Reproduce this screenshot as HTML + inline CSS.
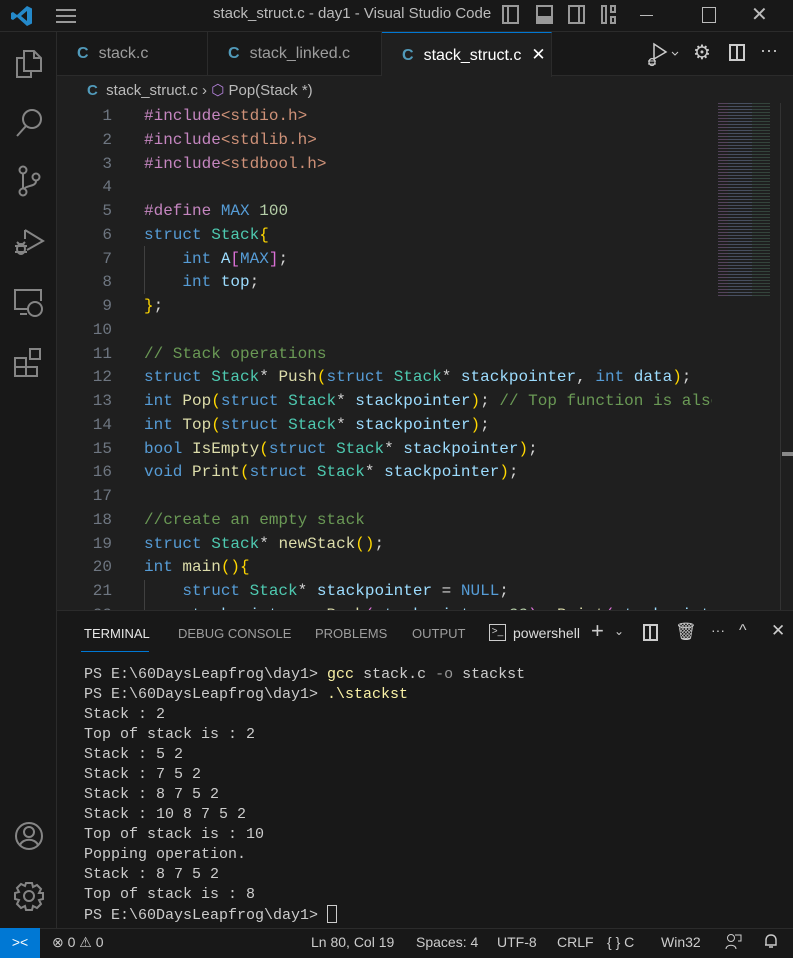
<!DOCTYPE html>
<html><head><meta charset="utf-8"><style>
*{margin:0;padding:0;box-sizing:border-box}
body{width:793px;height:958px;background:#1f1f1f;overflow:hidden;position:relative;font-family:"Liberation Sans",sans-serif;color:#ccc}
.abs{position:absolute}
.title{left:0;top:0;width:793px;height:32px;background:#181818;border-bottom:1px solid #2b2b2b}
.act{left:0;top:32px;width:57px;height:896px;background:#181818;border-right:1px solid #2b2b2b}
.tabs{left:57px;top:32px;width:736px;height:44px;background:#181818;border-bottom:1px solid #2b2b2b}
.tab{position:absolute;top:0;height:44px;border-right:1px solid #2b2b2b;font-size:16px;line-height:44px;color:#9d9d9d}
.tab b{color:#519aba;font-weight:bold;margin:0 10px 0 20px}
.code{font-family:"Liberation Mono",monospace;font-size:16px;white-space:pre;line-height:23.75px}
.ln{left:60px;width:52px;text-align:right;color:#6e7681}
.src{left:144px;width:568px;overflow:hidden;color:#9cdcfe}
.k{color:#569cd6}.p{color:#c586c0}.s{color:#ce9178}.t{color:#4ec9b0}.f{color:#dcdcaa}.n{color:#b5cea8}.c{color:#6a9955}.y{color:#ffd700}.m{color:#da70d6}.w{color:#d4d4d4}
.term{left:57px;top:610px;width:736px;height:318px;background:#181818;border-top:1px solid #2b2b2b}
.th{font-size:13px;color:#9d9d9d;top:626px}
.tout{left:84px;top:665px;font-family:"Liberation Mono",monospace;font-size:15px;line-height:20px;white-space:pre;color:#ccc}
.status{left:0;top:928px;width:793px;height:30px;background:#181818;border-top:1px solid #2b2b2b}
.st{position:absolute;top:934px;font-size:14px;color:#ccc}
.ic{stroke:#858585;fill:none;stroke-width:2}
</style></head><body>
<div class="abs title"></div>
<svg class="abs" style="left:10px;top:4px" width="24" height="24" viewBox="0 0 24 24"><path d="M17 2 L22 4.5 V19.5 L17 22 L7 13 L3 16 L1 15 V9 L3 8 L7 11 Z M17 7 L11 12 L17 17Z" fill="#2489ca"/></svg>
<div class="abs" style="left:56px;top:9px;width:20px;height:14px;border-top:2px solid #999;border-bottom:2px solid #999"><div style="margin-top:4px;border-top:2px solid #999"></div></div>
<div class="abs" style="left:213px;top:5px;font-size:15px;color:#bbb">stack_struct.c - day1 - Visual Studio Code</div>
<div class="abs" style="left:502px;top:5px;width:17px;height:19px;border:2px solid #999"><div style="width:5px;height:15px;border-right:2px solid #999"></div></div>
<div class="abs" style="left:536px;top:5px;width:17px;height:19px;border:2px solid #999"><div style="margin-top:9px;height:8px;background:#999"></div></div>
<div class="abs" style="left:568px;top:5px;width:17px;height:19px;border:2px solid #999"><div style="margin-left:8px;width:5px;height:15px;border-left:2px solid #999"></div></div>
<div class="abs" style="left:601px;top:5px;width:6px;height:19px;border:2px solid #999"></div>
<div class="abs" style="left:610px;top:5px;width:6px;height:8px;border:2px solid #999"></div>
<div class="abs" style="left:610px;top:16px;width:6px;height:8px;border:2px solid #999"></div>
<div class="abs" style="left:640px;top:15px;width:13px;border-top:1px solid #bbb"></div>
<div class="abs" style="left:702px;top:7px;width:14px;height:16px;border:1px solid #bbb"></div>
<div class="abs" style="left:751px;top:2px;font-size:20px;color:#bbb">✕</div>

<div class="abs act"></div>
<svg class="abs" style="left:14px;top:47px" width="30" height="32" viewBox="0 0 30 32"><path class="ic" d="M10 4 H20 L27 11 V24 H10 Z M20 4 V11 H27 M10 11 H3 V30 H17 V24"/></svg>
<svg class="abs" style="left:14px;top:107px" width="30" height="32" viewBox="0 0 30 32"><circle class="ic" cx="18" cy="12" r="9"/><path class="ic" d="M12 19 L3 29"/></svg>
<svg class="abs" style="left:14px;top:165px" width="30" height="34" viewBox="0 0 30 34"><circle class="ic" cx="9" cy="5" r="3.5"/><circle class="ic" cx="9" cy="27" r="3.5"/><circle class="ic" cx="22" cy="12" r="3.5"/><path class="ic" d="M9 9 V23 M22 16 C22 22 12 20 10 24"/></svg>
<svg class="abs" style="left:12px;top:225px" width="34" height="34" viewBox="0 0 34 34"><path class="ic" d="M13 5 L31 16 L15 25 M13 5 V14"/><ellipse class="ic" cx="9" cy="24" rx="4" ry="5"/><path class="ic" d="M3 21 H15 M3 27 H15 M5 17 L7 19 M13 17 L11 19"/></svg>
<svg class="abs" style="left:13px;top:287px" width="32" height="32" viewBox="0 0 32 32"><path class="ic" d="M16 22 H2 V3 H28 V14 M7 27 H14"/><circle class="ic" cx="22" cy="22" r="7"/></svg>
<svg class="abs" style="left:13px;top:346px" width="32" height="32" viewBox="0 0 32 32"><path class="ic" d="M2 12 H13 V30 H2 Z M2 21 H24 V30 H13 M17 3 H27 V13 H17 Z"/></svg>
<svg class="abs" style="left:13px;top:820px" width="32" height="32" viewBox="0 0 32 32"><circle class="ic" cx="16" cy="16" r="13"/><circle class="ic" cx="16" cy="12" r="5"/><path class="ic" d="M7 25 C10 18 22 18 25 25"/></svg>
<svg class="abs" style="left:13px;top:880px" width="32" height="32" viewBox="0 0 32 32"><circle class="ic" cx="16" cy="16" r="5"/><path class="ic" d="M13 3 H19 L20 7 L24 5 L28 9 L26 13 L30 13 V19 L26 20 L28 24 L24 28 L20 26 L19 30 H13 L12 26 L8 28 L4 24 L6 20 L2 19 V13 L6 12 L4 8 L8 4 L12 6 Z"/></svg>

<div class="abs tabs"></div>
<div class="tab" style="left:57px;width:151px;top:32px"><b>C</b>stack.c</div>
<div class="tab" style="left:208px;width:174px;top:32px"><b>C</b>stack_linked.c</div>
<div class="tab" style="left:382px;width:170px;top:32px;background:#1f1f1f;color:#fff;border-top:1px solid #0078d4;height:45px"><b>C</b>stack_struct.c<span style="margin-left:10px;font-size:17px">✕</span></div>
<svg class="abs" style="left:645px;top:42px" width="40" height="26" viewBox="0 0 40 26"><path d="M9 2 L21 10 L9 17 Z" stroke="#ccc" fill="none" stroke-width="1.5"/><ellipse cx="7" cy="20" rx="3" ry="3.5" stroke="#ccc" fill="#1f1f1f" stroke-width="1.3"/><path d="M3 19 H11 M3 22 H11" stroke="#ccc"/><path d="M27 10 L30 13 L33 10" stroke="#ccc" fill="none"/></svg>
<div class="abs" style="left:693px;top:40px;font-size:20px;color:#ccc">⚙</div>
<div class="abs" style="left:729px;top:44px;width:16px;height:17px;border:2px solid #ccc"><div style="margin-left:5px;width:2px;height:13px;background:#ccc"></div></div>
<div class="abs" style="left:760px;top:40px;font-size:18px;color:#ccc">···</div>

<div class="abs" style="left:87px;top:81px;font-size:15px;color:#bbb"><b style="color:#519aba">C</b>&nbsp; stack_struct.c &#8250; <span style="color:#b180d7">⬡</span> Pop(Stack *)</div>

<div class="abs code ln" style="top:105px">1
2
3
4
5
6
7
8
9
10
11
12
13
14
15
16
17
18
19
20
21
22</div>
<div class="abs code src" style="top:105px;height:505px"><span class="p">#include</span><span class="s">&lt;stdio.h&gt;</span>
<span class="p">#include</span><span class="s">&lt;stdlib.h&gt;</span>
<span class="p">#include</span><span class="s">&lt;stdbool.h&gt;</span>

<span class="p">#define</span> <span class="k">MAX</span> <span class="n">100</span>
<span class="k">struct</span> <span class="t">Stack</span><span class="y">{</span>
    <span class="k">int</span> A<span class="m">[</span><span class="k">MAX</span><span class="m">]</span><span class="w">;</span>
    <span class="k">int</span> top<span class="w">;</span>
<span class="y">}</span><span class="w">;</span>

<span class="c">// Stack operations</span>
<span class="k">struct</span> <span class="t">Stack</span><span class="w">*</span> <span class="f">Push</span><span class="y">(</span><span class="k">struct</span> <span class="t">Stack</span><span class="w">*</span> stackpointer<span class="w">,</span> <span class="k">int</span> data<span class="y">)</span><span class="w">;</span>
<span class="k">int</span> <span class="f">Pop</span><span class="y">(</span><span class="k">struct</span> <span class="t">Stack</span><span class="w">*</span> stackpointer<span class="y">)</span><span class="w">;</span> <span class="c">// Top function is also</span>
<span class="k">int</span> <span class="f">Top</span><span class="y">(</span><span class="k">struct</span> <span class="t">Stack</span><span class="w">*</span> stackpointer<span class="y">)</span><span class="w">;</span>
<span class="k">bool</span> <span class="f">IsEmpty</span><span class="y">(</span><span class="k">struct</span> <span class="t">Stack</span><span class="w">*</span> stackpointer<span class="y">)</span><span class="w">;</span>
<span class="k">void</span> <span class="f">Print</span><span class="y">(</span><span class="k">struct</span> <span class="t">Stack</span><span class="w">*</span> stackpointer<span class="y">)</span><span class="w">;</span>

<span class="c">//create an empty stack</span>
<span class="k">struct</span> <span class="t">Stack</span><span class="w">*</span> <span class="f">newStack</span><span class="y">()</span><span class="w">;</span>
<span class="k">int</span> <span class="f">main</span><span class="y">(){</span>
    <span class="k">struct</span> <span class="t">Stack</span><span class="w">*</span> stackpointer <span class="w">=</span> <span class="k">NULL</span><span class="w">;</span>
    stackpointer <span class="w">=</span> <span class="f">Push</span><span class="m">(</span>stackpointer<span class="w">,</span> <span class="n">22</span><span class="m">)</span><span class="w">;</span> <span class="f">Print</span><span class="m">(</span>stackpoint</div>
<div class="abs" style="left:144px;top:246px;width:1px;height:48px;background:#404040"></div>
<div class="abs" style="left:144px;top:580px;width:1px;height:30px;background:#404040"></div>
<!-- minimap -->
<div class="abs" style="left:718px;top:103px;width:58px;height:195px;opacity:.5;background:
repeating-linear-gradient(180deg,transparent 0 1px,#1f1f1f 1px 3px),
linear-gradient(90deg,#8a6a9a 0 10px,#6f7fa0 10px 34px,#4a6a5a 34px 52px,transparent 52px)"></div>
<div class="abs" style="left:780px;top:103px;width:1px;height:507px;background:#333"></div>
<div class="abs" style="left:782px;top:452px;width:11px;height:4px;background:#888"></div>

<div class="abs term"></div>
<div class="abs th" style="left:84px;color:#e7e7e7">TERMINAL</div>
<div class="abs" style="left:81px;top:651px;width:68px;height:1px;background:#0078d4"></div>
<div class="abs th" style="left:178px">DEBUG CONSOLE</div>
<div class="abs th" style="left:315px">PROBLEMS</div>
<div class="abs th" style="left:412px">OUTPUT</div>
<div class="abs" style="left:489px;top:624px;width:17px;height:17px;border:1px solid #ccc;font-size:10px;line-height:14px;text-align:center;color:#ccc">&gt;_</div>
<div class="abs" style="left:513px;top:625px;font-size:14px;color:#ddd">powershell</div>
<div class="abs" style="left:591px;top:618px;font-size:22px;color:#ccc">+</div>
<div class="abs" style="left:614px;top:624px;font-size:12px;color:#ccc">⌄</div>
<div class="abs" style="left:643px;top:624px;width:15px;height:17px;border:2px solid #ccc"><div style="margin-left:4px;width:2px;height:13px;background:#ccc"></div></div>
<div class="abs" style="left:675px;top:622px;font-size:17px;color:#ccc">🗑</div>
<div class="abs" style="left:711px;top:622px;font-size:14px;color:#ccc">···</div>
<div class="abs" style="left:739px;top:622px;font-size:16px;color:#ccc">^</div>
<div class="abs" style="left:771px;top:621px;font-size:17px;color:#ccc">✕</div>
<div class="abs tout">PS E:\60DaysLeapfrog\day1&gt; <span style="color:#f9f1a5">gcc</span> stack.c <span style="color:#999">-o</span> stackst
PS E:\60DaysLeapfrog\day1&gt; <span style="color:#f9f1a5">.\stackst</span>
Stack : 2
Top of stack is : 2
Stack : 5 2
Stack : 7 5 2
Stack : 8 7 5 2
Stack : 10 8 7 5 2
Top of stack is : 10
Popping operation.
Stack : 8 7 5 2
Top of stack is : 8
PS E:\60DaysLeapfrog\day1&gt; <span style="display:inline-block;width:10px;height:18px;border:1px solid #ccc;vertical-align:-4px"></span></div>

<div class="abs status"></div>
<div class="abs" style="left:0;top:928px;width:40px;height:30px;background:#0078d4;color:#fff;font-size:14px;text-align:center;line-height:28px">&gt;&lt;</div>
<div class="st" style="left:52px">⊗ 0 ⚠ 0</div>
<div class="st" style="left:311px">Ln 80, Col 19</div>
<div class="st" style="left:416px">Spaces: 4</div>
<div class="st" style="left:497px">UTF-8</div>
<div class="st" style="left:557px">CRLF</div>
<div class="st" style="left:607px">{ } C</div>
<div class="st" style="left:661px">Win32</div>
<svg class="abs" style="left:724px;top:933px" width="18" height="18" viewBox="0 0 18 18"><circle cx="7" cy="5" r="3.5" stroke="#ccc" fill="none"/><path d="M2 16 C2 11 12 11 12 16 M11 2 H17 V8 H14" stroke="#ccc" fill="none"/></svg>
<svg class="abs" style="left:762px;top:932px" width="18" height="18" viewBox="0 0 18 18"><path d="M4 13 V8 C4 5 6 3 9 3 C12 3 14 5 14 8 V13 H3 M7 15 H11" stroke="#ccc" fill="none" stroke-width="1.4"/></svg>
</body></html>
